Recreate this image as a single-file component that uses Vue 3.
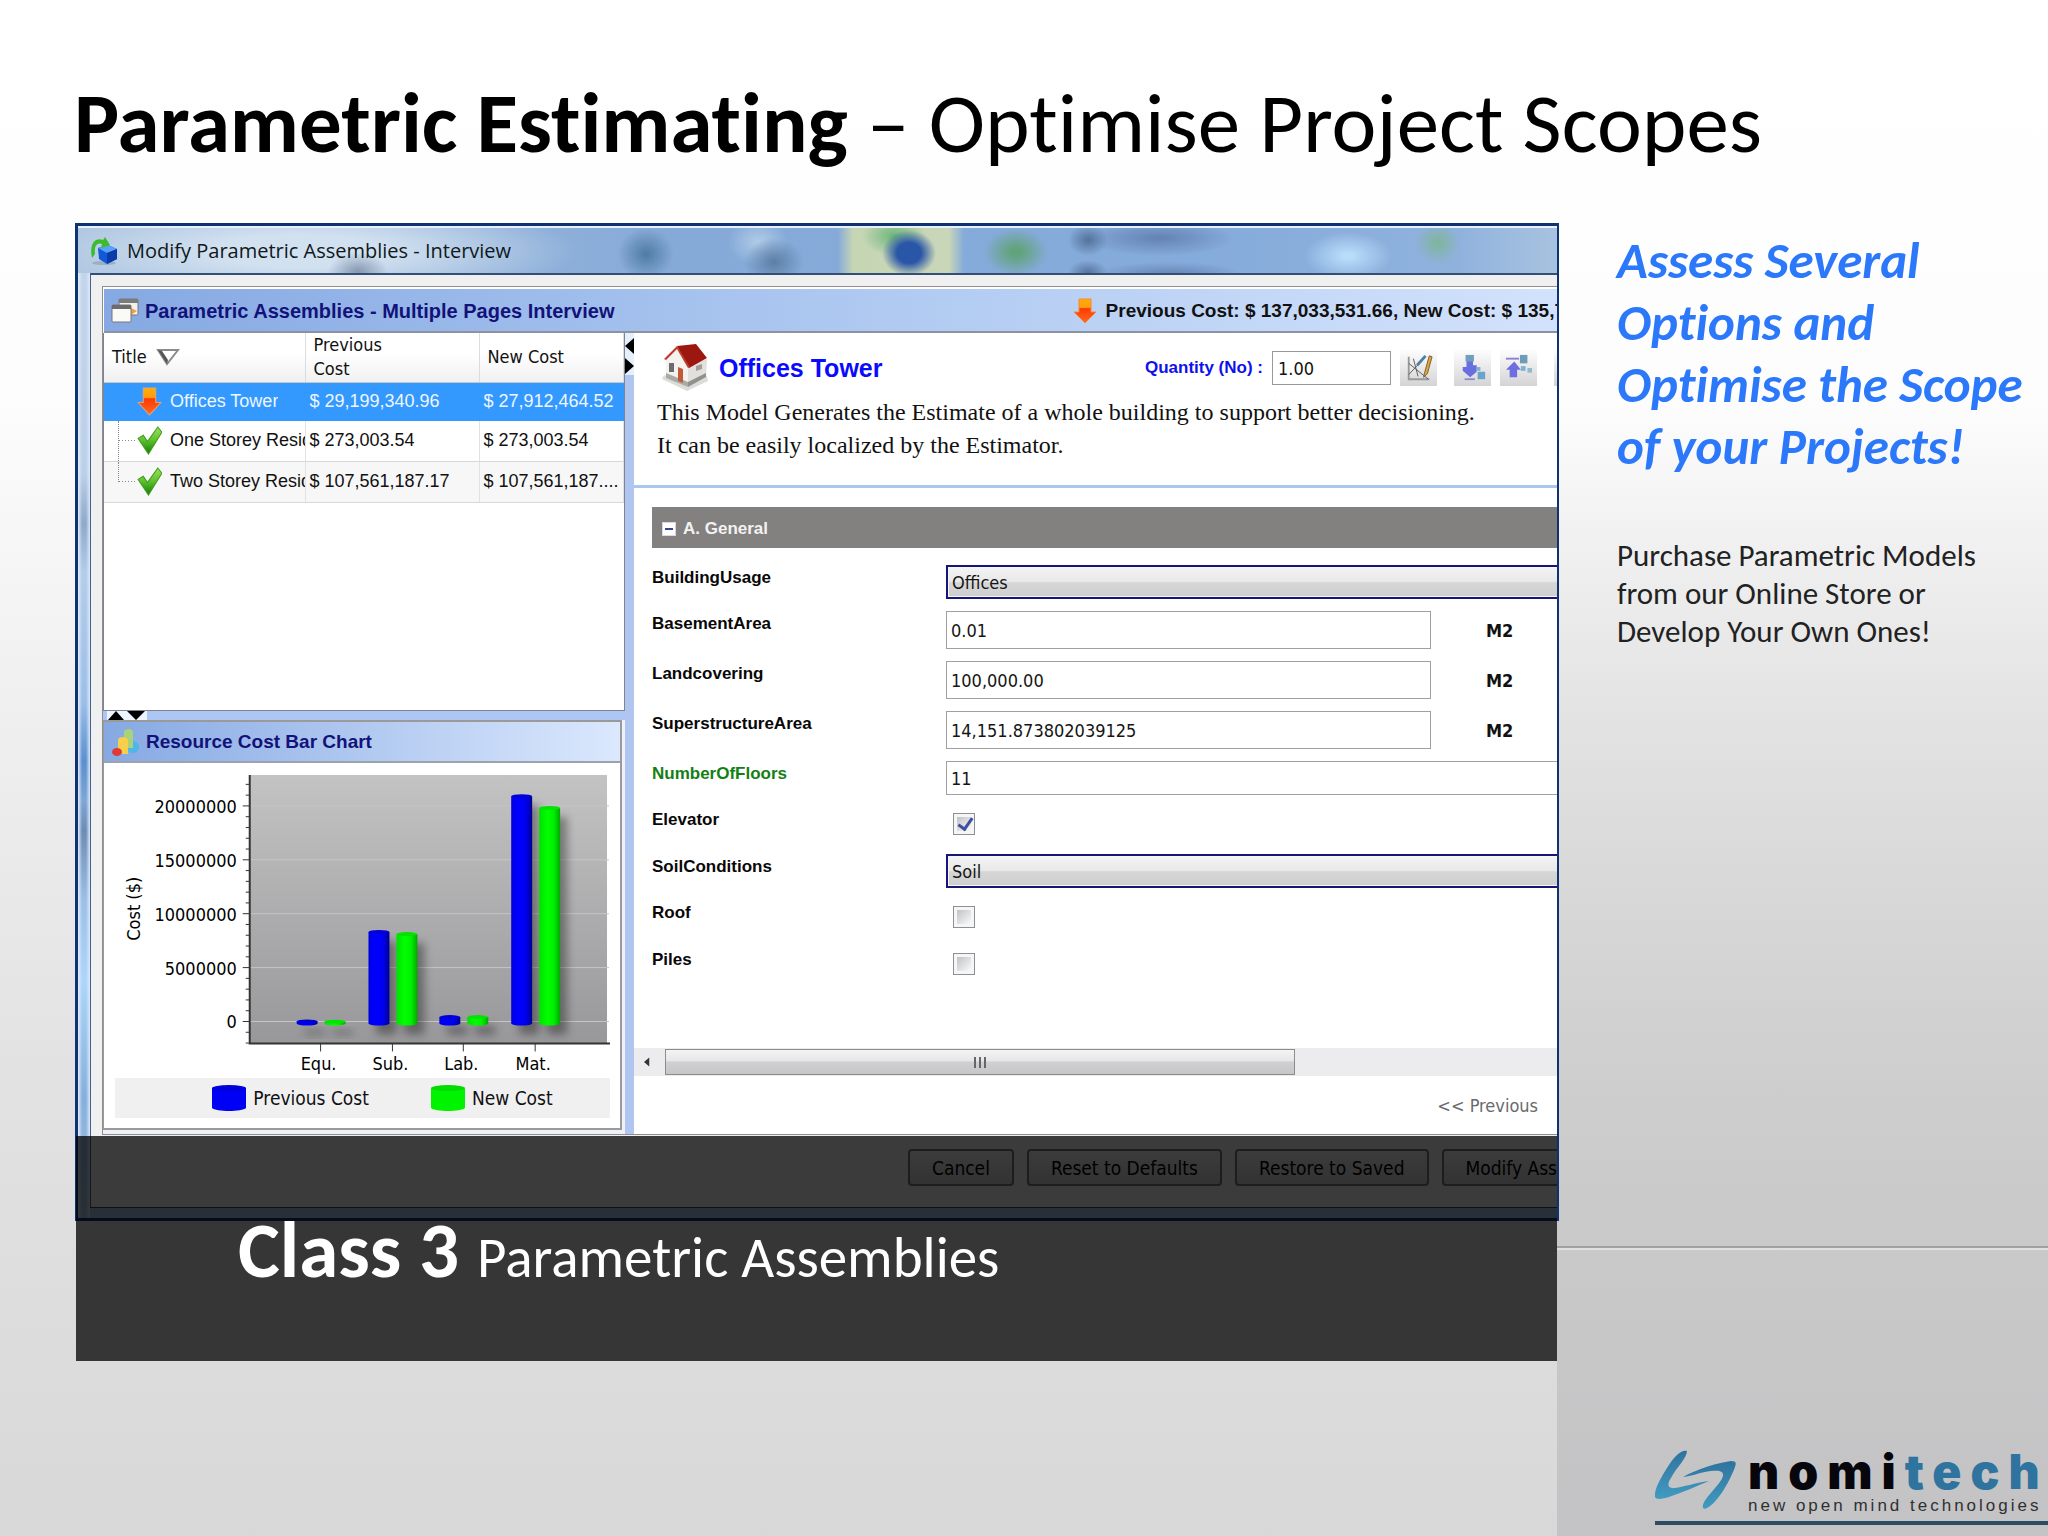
<script setup>
import { ref, computed } from 'vue'

// --- Assemblies list ---
const assemblies = ref([
  { id: 1, title: 'Offices Tower', previous: '$ 29,199,340.96', current: '$ 27,912,464.52', status: 'down' },
  { id: 2, title: 'One Storey Resid', previous: '$ 273,003.54', current: '$ 273,003.54', status: 'ok' },
  { id: 3, title: 'Two Storey Resid', previous: '$ 107,561,187.17', current: '$ 107,561,187....', status: 'ok' },
])
const selectedId = ref(1)

// --- Interview form ---
const quantity = ref('1.00')
const fields = ref([
  { key: 'BuildingUsage', type: 'select', value: 'Offices', options: ['Offices', 'Residential'] },
  { key: 'BasementArea', type: 'number', value: '0.01', unit: 'M2' },
  { key: 'Landcovering', type: 'number', value: '100,000.00', unit: 'M2' },
  { key: 'SuperstructureArea', type: 'number', value: '14,151.873802039125', unit: 'M2' },
  { key: 'NumberOfFloors', type: 'text', value: '11', changed: true },
  { key: 'Elevator', type: 'check', value: true },
  { key: 'SoilConditions', type: 'select', value: 'Soil', options: ['Soil', 'Rock'] },
  { key: 'Roof', type: 'check', value: false },
  { key: 'Piles', type: 'check', value: false },
])

const actions = ['Cancel', 'Reset to Defaults', 'Restore to Saved', 'Modify Assemblies']

// --- Resource chart ---
const zeroY = 259
const stepY = 54
const barWidth = 21

const resources = [
  { name: 'Equ.', x: 217, previous: 100000, current: 80000 },
  { name: 'Sub.', x: 289, previous: 8400000, current: 8200000 },
  { name: 'Lab.', x: 360, previous: 500000, current: 500000 },
  { name: 'Mat.', x: 432, previous: 21000000, current: 19900000 },
]

const majorTicks = [0, 5000000, 10000000, 15000000, 20000000]
const yOf = (value) => zeroY - (value / 5000000) * stepY

const minorTicks = computed(() => {
  const ticks = []
  for (let i = -2; i <= 22; i++) {
    if (i % 5 !== 0) ticks.push(yOf(i * 1000000))
  }
  return ticks
})

const bars = computed(() =>
  resources.flatMap((r) => [
    { id: r.name + 'p', x: r.x - 24, y: yOf(r.previous), fill: 'url(#barBlue)', top: '#0000d8' },
    { id: r.name + 'n', x: r.x + 4, y: yOf(r.current), fill: 'url(#barGreen)', top: '#00e400' },
  ])
)
</script>

<template>
  <div class="slide">
    <h1><strong>Parametric Estimating</strong> – Optimise Project Scopes</h1>

    <div class="content">
      <main class="shot">
        <section class="window">
          <!-- Title bar -->
          <header class="titlebar">
            <svg class="app-icon" viewBox="0 0 28 30">
              <ellipse cx="14" cy="27" rx="12" ry="2" fill="#8fa3b5" opacity="0.7" />
              <path d="M8 12 L18 9 L27 13 L27 23 L17 28 L9 23Z" fill="#1259d6" />
              <path d="M8 12 L18 9 L27 13 L17 17Z" fill="#5aa2f5" />
              <path d="M17 17 L27 13 L27 23 L17 28Z" fill="#0a3ba8" />
              <path d="M2 22 C-1 8 5 1 13 4 L15 1 L20 9 L11 12 L12 8 C7 6 4 10 5 18Z" fill="#3cbb2f" />
            </svg>
            <span>Modify Parametric Assemblies - Interview</span>
          </header>

          <div class="client">
            <div class="panel">
              <div class="panel-head">
                <svg class="pages-icon" viewBox="0 0 28 26">
                  <rect x="8" y="1" width="19" height="16" rx="1" fill="#f2f2ee" stroke="#777" />
                  <rect x="8" y="1" width="19" height="4" fill="#7c7c7c" />
                  <path d="M20 10 L26 13 L20 17Z" fill="#f0a040" />
                  <rect x="1" y="7" width="19" height="17" rx="1" fill="#fafaf6" stroke="#777" />
                  <rect x="1" y="7" width="19" height="4" fill="#6c6c6c" />
                </svg>
                <h2>Parametric Assemblies - Multiple Pages Interview</h2>
                <div class="totals">
                  <svg class="arrow-icon" viewBox="0 0 24 26">
                    <path d="M6 1 H18 V14 H23 L12 25 L1 14 H6Z" fill="url(#arrowFill)" stroke="#f08a3c" stroke-width="1" />
                  </svg>
                  <span>Previous Cost: $ 137,033,531.66, New Cost: $ 135,7</span>
                </div>
              </div>

              <div class="panes">
                <div class="left">
                  <!-- Assemblies table -->
                  <div class="table-box">
                    <table>
                      <colgroup>
                        <col class="col-title" />
                        <col class="col-prev" />
                        <col />
                      </colgroup>
                      <thead>
                        <tr>
                          <th>
                            <div class="sort">
                              Title
                              <svg viewBox="0 0 24 18">
                                <path d="M2 2 H22 L11 16Z" fill="#fff" stroke="#8b8b8b" stroke-width="2" />
                                <path d="M2 2 L11 16 L12 12 L6 3Z" fill="#555" />
                              </svg>
                            </div>
                          </th>
                          <th>Previous<br />Cost</th>
                          <th>New Cost</th>
                        </tr>
                      </thead>
                      <tbody>
                        <tr
                          v-for="a in assemblies"
                          :key="a.id"
                          :class="{ selected: a.id === selectedId }"
                          @click="selectedId = a.id"
                        >
                          <td>
                            <div class="tree">
                              <svg v-if="a.status === 'down'" class="status" viewBox="0 0 24 28">
                                <path d="M6 1 H18 V15 H23 L12 27 L1 15 H6Z" fill="url(#arrowFill)" stroke="#e8a070" stroke-width="1" />
                              </svg>
                              <svg v-else class="status" viewBox="0 0 24 28">
                                <path d="M1 12 L6 9 L10 15 L20 1 L24 6 L11 27Z" fill="url(#checkFill)" stroke="#3f9a1c" stroke-width="1" />
                              </svg>
                              <span class="name-cell">{{ a.title }}</span>
                            </div>
                          </td>
                          <td>{{ a.previous }}</td>
                          <td>{{ a.current }}</td>
                        </tr>
                      </tbody>
                    </table>
                  </div>

                  <div class="split-h">
                    <svg viewBox="0 0 40 9">
                      <rect width="40" height="9" fill="#eef3fc" />
                      <path d="M1 9 L9 0 L17 9Z M20 0 H38 L29 9Z" fill="#000" />
                    </svg>
                  </div>

                  <!-- Chart panel -->
                  <div class="chart-panel">
                    <div class="chart-head">
                      <svg class="chart-icon" viewBox="0 0 28 28">
                        <ellipse cx="21" cy="19" rx="6" ry="6" fill="#4db7e8" />
                        <path d="M12 4 C12 0 21 0 21 4 V20 H12Z" fill="#a9d37a" />
                        <path d="M6 12 C6 8 16 8 16 12 V26 H6Z" fill="#f8cf4a" />
                        <ellipse cx="5" cy="24" rx="5" ry="4" fill="#e03a34" />
                      </svg>
                      <h2>Resource Cost Bar Chart</h2>
                    </div>
                    <svg class="chart" viewBox="0 0 517 316">
                      <defs>
                        <linearGradient id="plotFill" x1="0" y1="0" x2="0" y2="1">
                          <stop offset="0" stop-color="#c3c3c4" />
                          <stop offset="1" stop-color="#98989a" />
                        </linearGradient>
                        <linearGradient id="barBlue">
                          <stop offset="0" stop-color="#0000e0" />
                          <stop offset="0.3" stop-color="#0000ff" />
                          <stop offset="0.7" stop-color="#0000f0" />
                          <stop offset="1" stop-color="#000090" />
                        </linearGradient>
                        <linearGradient id="barGreen">
                          <stop offset="0" stop-color="#00e000" />
                          <stop offset="0.4" stop-color="#00ff00" />
                          <stop offset="0.7" stop-color="#00f000" />
                          <stop offset="1" stop-color="#00a800" />
                        </linearGradient>
                        <linearGradient id="arrowFill" x1="0" y1="0" x2="0" y2="1">
                          <stop offset="0" stop-color="#ffb000" />
                          <stop offset="0.35" stop-color="#ff9a10" />
                          <stop offset="0.4" stop-color="#ff3a00" />
                          <stop offset="1" stop-color="#ff6a20" />
                        </linearGradient>
                        <linearGradient id="checkFill" x1="0" y1="0" x2="0" y2="1">
                          <stop offset="0" stop-color="#9be05a" />
                          <stop offset="0.5" stop-color="#5cc02c" />
                          <stop offset="1" stop-color="#117a08" />
                        </linearGradient>
                        <filter id="barShadow" x="-1" y="-1" width="3" height="3">
                          <feGaussianBlur stdDeviation="4" />
                        </filter>
                      </defs>
                      <rect x="146" y="12" width="358" height="269" fill="url(#plotFill)" />
                      <g v-for="t in majorTicks" :key="t">
                        <line x1="146" x2="506" :y1="yOf(t)" :y2="yOf(t)" stroke="#c6c6c8" stroke-width="1" />
                        <line x1="139" x2="146" :y1="yOf(t)" :y2="yOf(t)" stroke="#333" stroke-width="1" />
                        <text x="133" :y="yOf(t) + 7" text-anchor="end">{{ t }}</text>
                      </g>
                      <line v-for="y in minorTicks" :key="y" x1="142" x2="146" :y1="y" :y2="y" stroke="#333" stroke-width="1" />
                      <path d="M146 12 V281 H507" fill="none" stroke="#333" stroke-width="2" />
                      <g v-for="b in bars" :key="'s' + b.id">
                        <rect :x="b.x + 8" :y="b.y + 10" width="20" :height="262 - b.y" fill="#000" opacity="0.35" filter="url(#barShadow)" />
                      </g>
                      <g v-for="b in bars" :key="b.id">
                        <path
                          :d="`M${b.x} ${b.y + 1} V261 a${barWidth / 2} 2 0 0 0 ${barWidth} 0 V${b.y + 1}Z`"
                          :fill="b.fill"
                        />
                        <ellipse :cx="b.x + barWidth / 2" :cy="b.y + 1" :rx="barWidth / 2" ry="2" :fill="b.top" />
                      </g>
                      <g v-for="r in resources" :key="r.name">
                        <line :x1="r.x" :x2="r.x" y1="281" y2="289" stroke="#333" stroke-width="1" />
                        <text :x="r.x - 2" y="308" text-anchor="middle">{{ r.name }}</text>
                      </g>
                      <text transform="translate(36 146) rotate(-90)" text-anchor="middle">Cost ($)</text>
                    </svg>
                    <div class="legend">
                      <span class="legend-item">
                        <svg viewBox="0 0 34 26">
                          <path d="M0 3 V23 C4 27 30 27 34 23 V3Z" fill="#0000f4" />
                          <ellipse cx="17" cy="3" rx="17" ry="3" fill="#0000d8" />
                        </svg>
                        Previous Cost
                      </span>
                      <span class="legend-item">
                        <svg viewBox="0 0 34 26">
                          <path d="M0 3 V23 C4 27 30 27 34 23 V3Z" fill="#00f400" />
                          <ellipse cx="17" cy="3" rx="17" ry="3" fill="#00dc00" />
                        </svg>
                        New Cost
                      </span>
                    </div>
                  </div>
                </div>

                <div class="split-v">
                  <svg viewBox="0 0 9 42">
                    <rect width="9" height="42" fill="#e6effc" />
                    <path d="M9 5 V21 L0 13Z M0 25 V41 L9 33Z" fill="#000" />
                  </svg>
                </div>

                <!-- Interview pane -->
                <div class="right">
                  <div class="intro">
                    <div class="intro-top">
                      <svg class="house" viewBox="0 0 48 50">
                        <path d="M1 36 L26 48 L47 38 L46 33 L26 42 L3 32Z" fill="#dcdcd8" />
                        <path d="M5 16 L16 6 L27 22 L27 44 L5 34Z" fill="#f4f2ee" />
                        <path d="M27 22 L46 16 L45 34 L27 44Z" fill="#e2e0dc" />
                        <path d="M5 30 L27 39 L27 44 L5 35Z" fill="#a8aaa6" />
                        <path d="M27 39 L45 30 L45 34 L27 44Z" fill="#8f918d" />
                        <path d="M16 3 L35 1 L46 15 L28 25Z" fill="#9c1710" />
                        <path d="M16 3 L3 16 L5 17 L16 6 L27 25 L29 24Z" fill="#c0372c" />
                        <rect x="8" y="20" width="5" height="9" fill="#6d6a72" />
                        <path d="M17 24 L22 26 V40 L17 38Z" fill="#c25a3a" />
                        <path d="M35 23 L41 21 V26 L35 28Z" fill="#a59d92" />
                      </svg>
                      <h3>Offices Tower</h3>
                      <div class="quantity">
                        <label for="quantity">Quantity (No) :</label>
                        <input id="quantity" v-model="quantity" type="text" />
                      </div>
                      <div class="tools">
                        <button class="tool" type="button" aria-label="Takeoff">
                          <svg viewBox="0 0 30 30">
                            <path d="M4 3 V27 H26" fill="none" stroke="#999" stroke-width="2" />
                            <path d="M4 10 L25 27 M4 22 L22 3 M9 5 L14 24" fill="none" stroke="#55585c" stroke-width="1" />
                            <path d="M13 12 L22 2" stroke="#4d7fa5" stroke-width="3" />
                            <path d="M20 25 L21 20 L26 2 L29 3 L24 21Z" fill="#dca548" stroke="#7a5a2a" stroke-width="1" />
                          </svg>
                        </button>
                        <button class="tool spaced" type="button" aria-label="Import">
                          <svg viewBox="0 0 30 30">
                            <path d="M8 3 H15 V12 H19 V19 L12 25 L4 18 V14 H8Z" fill="#6a6fe0" />
                            <rect x="7" y="1" width="9" height="7" fill="#6fa0bd" />
                            <path d="M6 27 H17" stroke="#8f8bd0" stroke-width="2" />
                            <rect x="19" y="14" width="4" height="4" fill="#7fb0cc" />
                            <rect x="20" y="19" width="8" height="8" fill="#69a3c7" />
                          </svg>
                        </button>
                        <button class="tool" type="button" aria-label="Export">
                          <svg viewBox="0 0 30 30">
                            <path d="M1 5 H15" stroke="#8a80d4" stroke-width="2" />
                            <path d="M5 25 H13 V17 H17 L10 8 L1 17 H5Z" fill="#6d6fe0" />
                            <rect x="16" y="1" width="8" height="9" fill="#6c9cb8" />
                            <rect x="17" y="13" width="5" height="5" fill="#7fb0cc" />
                            <rect x="24" y="15" width="5" height="5" fill="#93b9d0" />
                          </svg>
                        </button>
                        <button class="tool spaced" type="button" aria-label="More"></button>
                      </div>
                    </div>
                    <p>
                      This Model Generates the Estimate of a whole building to support better decisioning.<br />
                      It can be easily localized by the Estimator.
                    </p>
                  </div>

                  <form class="form" @submit.prevent>
                    <div class="group">
                      <button class="collapse" type="button" aria-label="Collapse"></button>
                      A. General
                    </div>
                    <div v-for="f in fields" :key="f.key" class="row">
                      <label :for="f.key" :class="{ changed: f.changed }">{{ f.key }}</label>
                      <select v-if="f.type === 'select'" :id="f.key" v-model="f.value" class="wide">
                        <option v-for="o in f.options" :key="o">{{ o }}</option>
                      </select>
                      <input v-else-if="f.type === 'check'" :id="f.key" v-model="f.value" type="checkbox" />
                      <input v-else-if="f.type === 'text'" :id="f.key" v-model="f.value" type="text" class="wide" />
                      <template v-else>
                        <input :id="f.key" v-model="f.value" type="text" class="measure" />
                        <span class="unit">{{ f.unit }}</span>
                      </template>
                    </div>
                  </form>

                  <div class="scroll">
                    <svg class="scroll-left" viewBox="0 0 8 12"><path d="M7 0 V12 L0 6Z" fill="#333" /></svg>
                    <div class="thumb"><i></i><i></i><i></i></div>
                  </div>
                  <div class="pager">
                    <button type="button">&lt;&lt; Previous</button>
                  </div>
                </div>
              </div>
            </div>

            <div class="actions">
              <button v-for="a in actions" :key="a" type="button">{{ a }}</button>
            </div>
          </div>
        </section>

        <div class="caption"><strong>Class 3 </strong>Parametric Assemblies</div>
      </main>

      <aside>
        <div class="pitch">
          <h2>Assess Several<br />Options and<br />Optimise the Scope<br />of your Projects!</h2>
          <p>Purchase Parametric Models<br />from our Online Store or<br />Develop Your Own Ones!</p>
        </div>
        <div class="brand">
          <div class="logo">
            <svg viewBox="0 0 82 60">
              <defs>
                <linearGradient id="logoFill" x1="0" y1="0" x2="0" y2="1">
                  <stop offset="0" stop-color="#2f739f" />
                  <stop offset="1" stop-color="#419bc0" />
                </linearGradient>
              </defs>
              <path
                d="M32 1 C26 -1 18 8 12 18 C5 29 -1 40 0 47 C1 50 8 49 14 47 C26 43 42 36 54 31 C40 33 28 37 20 38 C12 39 12 34 16 28 C21 18 32 8 32 1Z"
                fill="url(#logoFill)"
              />
              <path
                d="M28 27 C42 19 62 13 76 11 C82 11 81 14 80 17 C76 28 64 52 52 58 C49 60 47 58 48 55 C50 47 66 34 68 26 C69 21 64 20 56 21 C46 22 38 26 28 27Z"
                fill="url(#logoFill)"
              />
            </svg>
            <div>
              <div class="name">nomi<span>tech</span></div>
              <div class="tagline">new open mind technologies</div>
            </div>
          </div>
        </div>
      </aside>
    </div>
  </div>
</template>

<style>
body {
  margin: 0;
}
</style>

<style scoped>
* {
  box-sizing: border-box;
}

h1, h2, h3, p {
  margin: 0;
}

button, input, select {
  font-family: inherit;
  font-size: inherit;
  margin: 0;
}

.slide {
  display: flex;
  flex-direction: column;
  min-height: 100vh;
  overflow: hidden;
  background: linear-gradient(#fff 0%, #fdfdfd 25%, #f0f0f0 45%, #e2e2e2 70%, #d8d8d8 100%);
  font-family: "DejaVu Sans Condensed", "DejaVu Sans", sans-serif;
  font-size: 18px;
  color: #111;
}

h1 {
  padding: 74px 74px 0;
  height: 223px;
  font: 400 85px/98px Carlito, Lato, sans-serif;
  font-variant-ligatures: none;
  color: #000;
  white-space: nowrap;
}

.content {
  flex: 1;
  display: grid;
  grid-template-columns: minmax(0, 1fr) 491px;
  padding-left: 75px;
}

/* Window */
.window {
  margin-right: -2px;
  border: 3px solid #0f3273;
  border-right-width: 2px;
  position: relative;
  overflow: hidden;
  padding-left: 12px;
  padding-bottom: 10px;
  background:
    linear-gradient(90deg, #e4eefa, transparent 4px, transparent 8px, #dbe9f8 12px, transparent 12px),
    linear-gradient(#c4d6ea, #bcd0e8 25%, #8fa9cc 30%, #b4cdea 35%, #9cbfe8 48%, #5b90d0 54%, #7fa6d6 58%, #6d8cb4 61%, #9cc0e8 68%, #aed6fa 76%, #86b0dc 88%, #a7c4e4);
}

.titlebar {
  display: flex;
  align-items: center;
  gap: 9px;
  height: 47px;
  margin-left: -12px;
  padding-left: 12px;
  border-top: 2px solid #e8f1fb;
  font: 20px "Open Sans", sans-serif;
  color: #101820;
  background:
    radial-gradient(closest-side, #2a56a8 45%, transparent) 804px 2px / 54px 46px no-repeat,
    radial-gradient(closest-side, #6cb67a, transparent) 784px -12px / 64px 40px no-repeat,
    linear-gradient(90deg, transparent, #c6d6b4 12%, #c9d6b8 88%, transparent) 760px 0 / 126px 46px no-repeat,
    radial-gradient(closest-side, #62a37c 15%, transparent) 906px 0 / 64px 48px no-repeat,
    radial-gradient(closest-side, #4e7ba3, transparent) 540px 0 / 56px 52px no-repeat,
    radial-gradient(closest-side, #5c7fa6, transparent) 666px 10px / 60px 48px no-repeat,
    radial-gradient(closest-side, #b0cbe6, transparent) 650px -10px / 60px 48px no-repeat,
    radial-gradient(closest-side, #54729b, transparent) 990px -4px / 40px 32px no-repeat,
    radial-gradient(closest-side, #54729b, transparent) 990px 32px / 40px 26px no-repeat,
    radial-gradient(closest-side, #6482b2, transparent) 1006px -8px / 150px 36px no-repeat,
    radial-gradient(closest-side, #6482b2, transparent) 1016px 34px / 150px 26px no-repeat,
    radial-gradient(closest-side, #b8dcfa 10%, transparent) 1226px 4px / 88px 48px no-repeat,
    radial-gradient(closest-side, #7fb59a, transparent) 1338px -6px / 44px 42px no-repeat,
    linear-gradient(90deg, transparent, #a9c4e0) 1380px 0 / 110px 46px no-repeat,
    radial-gradient(closest-side, #8698b0, transparent) 250px 24px / 60px 40px no-repeat,
    radial-gradient(closest-side, #d2e1f0 30%, transparent) -60px -30px / 560px 106px no-repeat,
    linear-gradient(90deg, #a9c2de, #86aad8 40%, #84abdb 75%, #93b4dd);
}

.app-icon {
  width: 28px;
  height: 30px;
}

.client {
  border-top: 2px solid #334f75;
  border-left: 1px solid #44618a;
  border-bottom: 1px solid #33465e;
  padding: 11px 0 0 11px;
  background: #f0f0f0;
}

.panel {
  border: 1px solid #8e8e8e;
  border-right: 0;
  background: #fff;
}

.panel-head {
  display: flex;
  align-items: center;
  height: 44px;
  margin: 2px 0 0 1px;
  padding: 2px 0 0 7px;
  border-bottom: 2px solid #8d939e;
  background: linear-gradient(90deg, #86a9e3, #a9c5ef 45%, #d3e2fc);
  font: bold 19px "Liberation Sans", sans-serif;
  white-space: nowrap;
}

.pages-icon {
  width: 28px;
  height: 26px;
}

.panel-head h2,
.chart-head h2 {
  margin-left: 6px;
  font: bold 20px "Liberation Sans", sans-serif;
  color: #12127a;
}

.totals {
  display: flex;
  align-items: center;
  gap: 9px;
  margin-left: auto;
  margin-right: -8px;
}

.arrow-icon {
  width: 24px;
  height: 26px;
}

.panes {
  display: grid;
  grid-template-columns: 522px 9px minmax(0, 1fr);
}

.left {
  display: flex;
  flex-direction: column;
  background: #eef1f8;
}

.table-box {
  height: 378px;
  border: 1px solid #7d8593;
  border-top: 0;
  background: #fff;
}

table {
  width: 100%;
  table-layout: fixed;
  border-collapse: collapse;
}

.col-title {
  width: 201px;
}

.col-prev {
  width: 174px;
}

th {
  height: 49px;
  padding: 0 8px;
  border-right: 1px solid #dcdcdc;
  border-bottom: 1px solid #c8c8c8;
  background: linear-gradient(#fff 40%, #f0f0f1);
  font-weight: normal;
  line-height: 24px;
  text-align: left;
}

.sort {
  display: flex;
  align-items: center;
  gap: 9px;
}

.sort svg {
  width: 24px;
  height: 18px;
}

td {
  height: 41px;
  padding: 0 0 0 4px;
  border-right: 1px solid #e2e2e2;
  border-bottom: 1px solid #d8d8d8;
  overflow: hidden;
  white-space: nowrap;
  font-family: "Liberation Sans", sans-serif;
}

tr:last-child td {
  background: #f7f7f7;
}

.selected td {
  height: 38px;
  background: #3399ff;
  border-color: #3399ff;
  color: #eef6ff;
}

.tree {
  display: flex;
  align-items: center;
  margin-left: 10px;
}

.tree::before {
  content: "";
  flex: none;
  width: 18px;
  height: 40px;
  border-left: 1px dotted #888;
  background: repeating-linear-gradient(90deg, #888 0 1px, transparent 1px 3px) 0 50% / 100% 1px no-repeat;
}

.selected .tree::before {
  opacity: 0.4;
  height: 18px;
  margin-top: 18px;
  background-position: 0 0;
}

tr:last-child .tree::before {
  height: 20px;
  margin-bottom: 20px;
  background-position: 0 100%;
}

.status {
  width: 25px;
  height: 29px;
  margin-right: 8px;
  flex: none;
}

.name-cell {
  overflow: hidden;
}

.split-h {
  height: 9px;
  padding-left: 4px;
  background: #adc6f3;
}

.split-h svg {
  display: block;
  width: 40px;
  height: 9px;
}

.split-v {
  background: #b0c6f1;
}

.split-v svg {
  display: block;
  width: 9px;
  height: 42px;
}

.chart-panel {
  margin: 0 3px 4px 0;
  border: 1px solid #9a9a9a;
  border-width: 2px 2px 2px 1px;
  background: #fff;
}

.chart-head {
  display: flex;
  align-items: center;
  height: 41px;
  padding-left: 8px;
  border-bottom: 2px solid #9da3ad;
  background: linear-gradient(90deg, #86a9e3, #dbe8fd);
}

.chart-head h2 {
  font-size: 19px;
}

.chart-icon {
  width: 28px;
  height: 28px;
}

.chart {
  display: block;
  width: 100%;
}

.chart text {
  font-size: 18px;
}

.legend {
  display: flex;
  justify-content: center;
  gap: 62px;
  margin: 0 10px 10px 11px;
  padding: 6px 0 6px 40px;
  font-size: 19px;
  line-height: 28px;
  background: #f0f0f1;
}

.legend-item {
  display: flex;
  align-items: center;
  gap: 7px;
}

.legend svg {
  width: 34px;
  height: 26px;
}

/* Interview pane */
.right {
  display: flex;
  flex-direction: column;
  overflow: hidden;
}

.intro {
  height: 155px;
  padding: 10px 0 0 23px;
  border-bottom: 3px solid #aac8ee;
}

.intro-top {
  display: flex;
  align-items: center;
  height: 50px;
  margin-right: -34px;
  padding-left: 4px;
}

.house {
  width: 48px;
  height: 50px;
}

h3 {
  margin-left: 10px;
  font: bold 25px "Liberation Sans", sans-serif;
  color: #0a0aff;
}

.quantity {
  display: flex;
  align-items: center;
  gap: 9px;
  margin-left: auto;
  font: bold 17px "Liberation Sans", sans-serif;
  color: #1010ee;
}

.quantity input {
  width: 119px;
  height: 34px;
  padding: 0 5px;
  border: 1px solid #999;
  font: 18px "DejaVu Sans Condensed", sans-serif;
  color: #111;
}

.tools {
  display: flex;
  gap: 9px;
  margin-left: 9px;
}

.tool {
  display: grid;
  place-items: center;
  width: 37px;
  height: 36px;
  padding: 0;
  border: 0;
  background: linear-gradient(#fdfdfd, #d4d4d6);
}

.tool svg {
  width: 28px;
  height: 28px;
}

.spaced {
  margin-left: 8px;
}

.intro p {
  margin-top: 3px;
  font: 24px/33px "Liberation Serif", serif;
  white-space: nowrap;
}

.form {
  display: flex;
  flex-direction: column;
  gap: 12px;
  margin: 19px -20px 0 18px;
}

.group {
  display: flex;
  align-items: center;
  gap: 7px;
  height: 41px;
  margin-bottom: 5px;
  padding: 2px 0 0 10px;
  background: #838080;
  font: bold 17px "Liberation Sans", sans-serif;
  color: #f2f2f2;
}

.collapse {
  width: 14px;
  height: 14px;
  padding: 0;
  border: 1px solid #d8d8e0;
  background: linear-gradient(#34488c, #34488c) center / 8px 2px no-repeat #fff;
}

.row {
  display: flex;
  align-items: center;
}

.row label {
  align-self: flex-start;
  width: 294px;
  font: bold 17px/26px "Liberation Sans", sans-serif;
  color: #080808;
}

.row label.changed {
  color: #138013;
}

.row select,
.row input[type="text"] {
  border: 1px solid #a0a0a0;
  border-radius: 0;
  padding: 0 4px;
  background: #fff;
  color: #151515;
}

.row .wide {
  flex: 1;
  height: 34px;
}

.row select {
  appearance: none;
  border: 2px solid #15157a;
  padding: 0 4px;
  background: linear-gradient(#f4f4f4, #e8e8e9 50%, #d6d6d7 52%, #cfcfd0);
  box-shadow: inset 0 0 0 1px #f6f6f8;
}

.row .measure {
  width: 485px;
  height: 38px;
}

.unit {
  margin-left: 55px;
  font-weight: bold;
}

.row input[type="checkbox"] {
  appearance: none;
  width: 22px;
  height: 22px;
  margin: 6px 0 7px 7px;
  border: 1px solid #8c8f94;
  background: linear-gradient(135deg, #bfc2c6, #fafafa) center / 14px 14px no-repeat #f6f6f6;
}

.row input[type="checkbox"]:checked::after {
  content: "";
  display: block;
  width: 6px;
  height: 12px;
  margin: 1px 0 0 7px;
  border: solid #3f4f9f;
  border-width: 0 3px 3px 0;
  transform: rotate(35deg);
}

.scroll {
  display: flex;
  align-items: center;
  gap: 15px;
  height: 28px;
  margin-top: auto;
  padding-left: 10px;
  background: #ececee;
}

.scroll-left {
  width: 6px;
  height: 12px;
}

.thumb {
  display: flex;
  align-items: center;
  justify-content: center;
  gap: 3px;
  width: 69%;
  height: 26px;
  border: 1px solid #8c8c8c;
  background: linear-gradient(#f4f4f4, #e6e6e7 45%, #d0d0d2 50%, #c6c6c8);
}

.thumb i {
  width: 2px;
  height: 11px;
  background: #666;
}

.pager {
  display: flex;
  align-items: center;
  justify-content: flex-end;
  height: 58px;
  padding-right: 19px;
}

.pager button {
  padding: 0;
  border: 0;
  background: none;
  color: #6a6a6a;
}

.actions {
  display: flex;
  justify-content: flex-end;
  gap: 13px;
  margin-right: -91px;
  padding: 14px 0 21px;
}

.actions button {
  height: 37px;
  padding: 0 22px;
  border: 2px solid #77777a;
  border-radius: 4px;
  background: linear-gradient(#f4f4f4, #cfcfcf);
  font-size: 19px;
  color: #000;
  white-space: nowrap;
}

/* Caption band lies over the lower edge of the window */
.caption {
  position: relative;
  height: 225px;
  margin: -85px 0 0 1px;
  padding: 69px 0 0 162px;
  background: rgba(0, 0, 0, 0.755);
  font: 57px/90px Carlito, Lato, sans-serif;
  font-variant-ligatures: none;
  color: #fff;
}

.caption strong {
  font-size: 79px;
}

/* Side column */
aside {
  display: flex;
  flex-direction: column;
  background: linear-gradient(rgba(190, 190, 192, 0) 15%, rgba(190, 190, 192, 0.6) 70%, rgba(190, 190, 192, 0.8));
}

.pitch {
  height: 1025px;
  padding: 7px 0 0 60px;
  white-space: nowrap;
  border-bottom: 2px solid #a0a0a2;
}

.pitch h2 {
  font: italic bold 51px/62px Carlito, Lato, sans-serif;
  font-variant-ligatures: none;
  color: #2b78fb;
}

.pitch p {
  margin-top: 58px;
  font: 31px/38px Carlito, Lato, sans-serif;
  font-variant-ligatures: none;
  color: #222;
}

.brand {
  flex: 1;
  display: flex;
  align-items: flex-end;
  padding: 0 0 11px 98px;
  border-top: 2px solid #e0e0e0;
}

.logo {
  flex: 1;
  display: flex;
  align-items: flex-start;
  gap: 11px;
  padding-bottom: 2px;
  border-bottom: 4px solid #2d4c63;
  white-space: nowrap;
}

.logo svg {
  width: 82px;
  height: 60px;
  flex: none;
}

.name {
  font: 900 48px/43px Inter, sans-serif;
  letter-spacing: 9px;
  color: #06060c;
}

.name span {
  color: #2f739f;
}

.tagline {
  font: 17px/26px "Liberation Sans", sans-serif;
  letter-spacing: 3px;
  color: #303030;
}
</style>
